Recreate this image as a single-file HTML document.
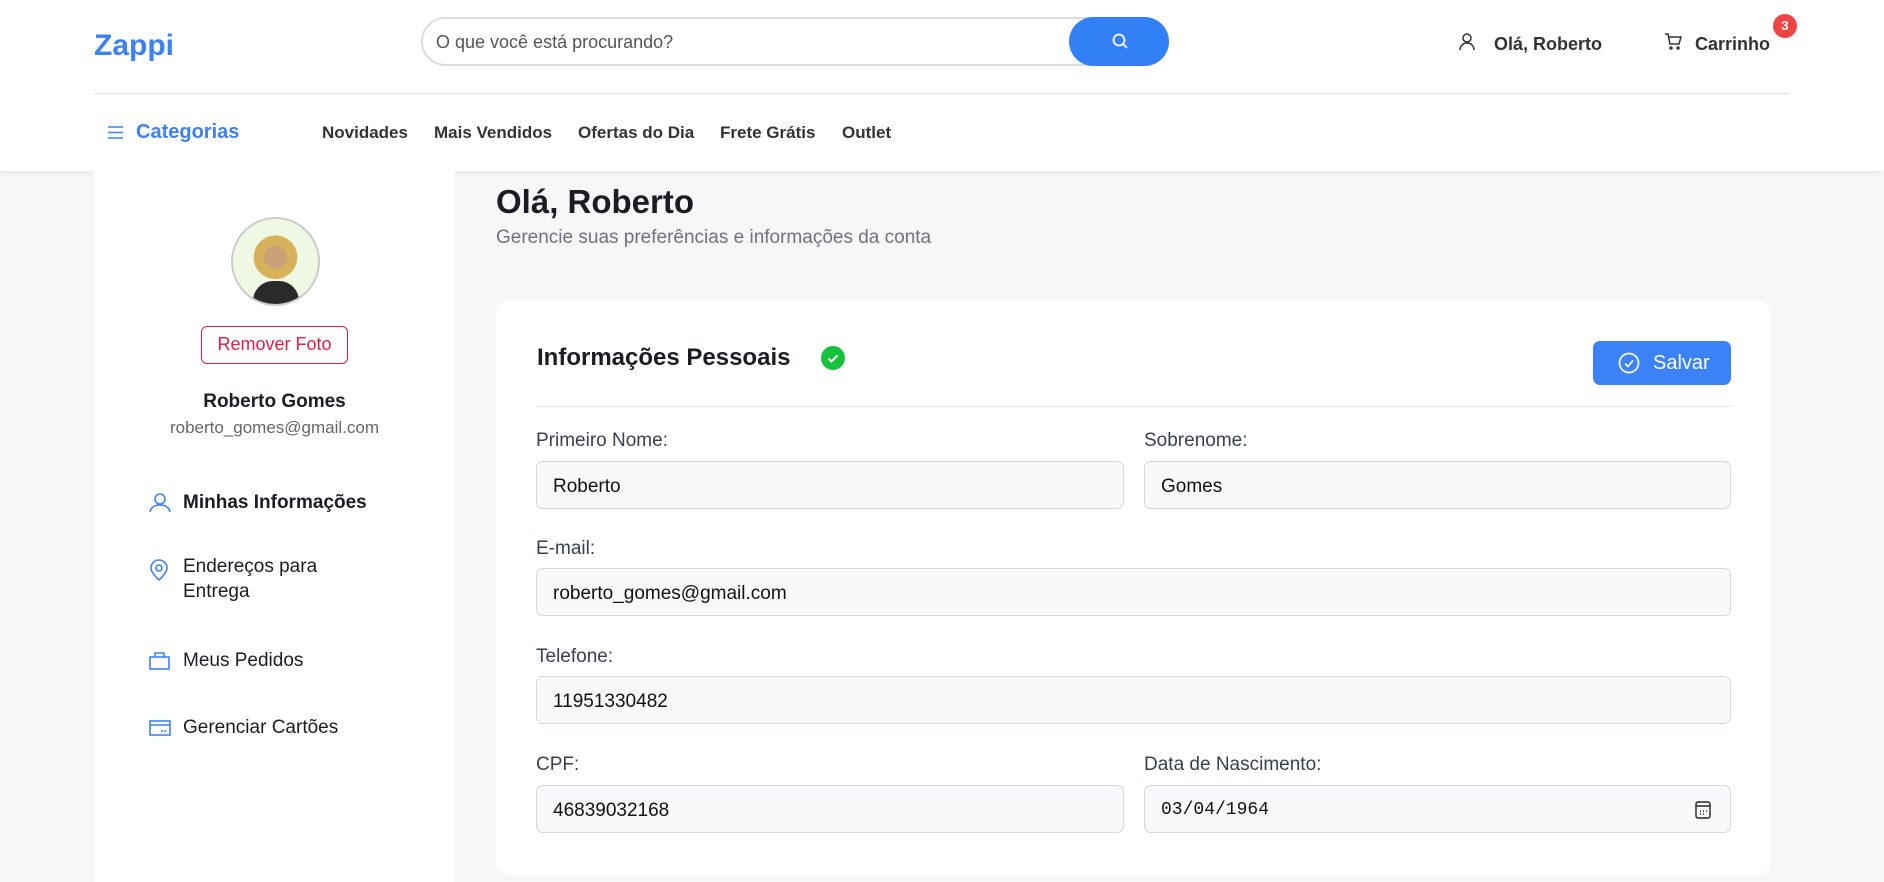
<!DOCTYPE html>
<html><head><meta charset="utf-8"><style>
*{box-sizing:border-box;margin:0;padding:0}
body{width:1884px;height:882px;overflow:hidden;background:#f7f7f8;font-family:"Liberation Sans",sans-serif;color:#1a1d26;position:relative}
.hdr{position:absolute;left:0;top:0;width:1884px;height:171px;background:#fff;box-shadow:0 2px 6px rgba(0,0,0,.06)}
.abs{position:absolute}
.logo{left:94px;top:29px;font-size:30px;font-weight:bold;color:#3b82f6}
.search{left:421px;top:17px;width:748px;height:49px;border:2px solid #ddd;border-radius:25px;background:#fff}
.search span{position:absolute;left:13px;top:13px;font-size:18px;color:#555}
.sbtn{left:1069px;top:17px;width:100px;height:49px;border-radius:25px;background:#3180f6}
.hl{left:94px;top:93px;width:1696px;height:1px;background:#e2e2e2}
.nav{top:123px;font-size:17px;font-weight:bold;color:#333}
.side{left:94px;top:171px;width:361px;height:711px;background:#fff}
.menu{font-size:19px;color:#1a1d26}
.card{left:496px;top:300px;width:1275px;height:575px;background:#fff;border-radius:14px}
.lbl{font-size:19px;color:#374151}
.inp{height:48px;border:1px solid #d4d7dd;border-radius:7px;background:#f8f9fb;font-size:19px;padding:14px 16px;color:#111}
</style></head><body>
<div class="hdr">
<div class="abs logo">Zappi</div>
<div class="abs search"><span>O que você está procurando?</span></div>
<div class="abs sbtn"><svg class="abs" style="left:42px;top:15px" width="18" height="18" viewBox="0 0 18 18" fill="none" stroke="#fff" stroke-width="1.8"><circle cx="8" cy="8" r="5.5"/><path d="M12 12l4 4"/></svg></div>
<svg class="abs" style="left:1459px;top:33px" width="16" height="18" viewBox="0 0 16 18" fill="none" stroke="#333" stroke-width="1.5"><circle cx="8" cy="5" r="4"/><path d="M1 17c0-4 3-7 7-7s7 3 7 7"/></svg>
<div class="abs" style="left:1494px;top:34px;font-size:18px;font-weight:bold;color:#333">Olá, Roberto</div>
<svg class="abs" style="left:1664px;top:33px" width="18" height="17" viewBox="0 0 18 17" fill="none" stroke="#333" stroke-width="1.5"><path d="M1 1h3l2 10h9l2-7H5"/><circle cx="7" cy="15" r="1"/><circle cx="14" cy="15" r="1"/></svg>
<div class="abs" style="left:1695px;top:34px;font-size:18px;font-weight:bold;color:#333">Carrinho</div>
<div class="abs" style="left:1773px;top:14px;width:24px;height:24px;border-radius:12px;background:#ef4444;color:#fff;font-size:13px;font-weight:bold;text-align:center;line-height:24px">3</div>
<div class="abs hl"></div>
<svg class="abs" style="left:108px;top:126px" width="15" height="13" viewBox="0 0 15 13" stroke="#3b82f6" stroke-width="1.6"><path d="M0 1h15M0 6.5h15M0 12h15"/></svg>
<div class="abs" style="left:136px;top:121px;font-size:20px;font-weight:bold;color:#3b82f6">Categorias</div>
<div class="abs nav" style="left:322px">Novidades</div>
<div class="abs nav" style="left:434px">Mais Vendidos</div>
<div class="abs nav" style="left:578px">Ofertas do Dia</div>
<div class="abs nav" style="left:720px">Frete Grátis</div>
<div class="abs nav" style="left:842px">Outlet</div>
</div>
<div class="abs side">
<div class="abs" style="left:137px;top:46px;width:89px;height:89px;border-radius:50%;border:2px solid #ccc;background:radial-gradient(circle at 50% 45%,#c9a277 0 18%,#d8b25a 19% 34%,#eef8e2 35%);overflow:hidden"><div style="position:absolute;left:20px;top:62px;width:46px;height:30px;background:#2a2a2a;border-radius:20px 20px 0 0"></div></div>
<div class="abs" style="left:107px;top:155px;width:147px;height:38px;border:1.5px solid #e11d48;border-radius:6px;color:#e11d48;font-size:18px;text-align:center;line-height:35px">Remover Foto</div>
<div class="abs" style="left:0;width:361px;top:220px;text-align:center;font-size:19px;font-weight:bold">Roberto Gomes</div>
<div class="abs" style="left:0;width:361px;top:247px;text-align:center;font-size:17px;color:#666">roberto_gomes@gmail.com</div>
<svg class="abs" style="left:55px;top:322px" width="22" height="20" viewBox="0 0 22 20" fill="none" stroke="#3b82f6" stroke-width="1.6"><circle cx="11" cy="6" r="5"/><path d="M1 19c1-5 5-7 10-7s9 2 10 7"/></svg>
<div class="abs menu" style="left:89px;top:321px;font-weight:bold">Minhas Informações</div>
<svg class="abs" style="left:56px;top:388px" width="18" height="22" viewBox="0 0 18 22" fill="none" stroke="#3b82f6" stroke-width="1.6"><path d="M9 21s8-7 8-12A8 8 0 0 0 1 9c0 5 8 12 8 12z"/><circle cx="9" cy="9" r="3"/></svg>
<div class="abs menu" style="left:89px;top:383px;line-height:25px">Endereços para<br>Entrega</div>
<svg class="abs" style="left:55px;top:481px" width="21" height="18" viewBox="0 0 21 18" fill="none" stroke="#3b82f6" stroke-width="1.6"><rect x="1" y="5" width="19" height="12"/><path d="M6 5V1h9v4"/></svg>
<div class="abs menu" style="left:89px;top:479px">Meus Pedidos</div>
<svg class="abs" style="left:55px;top:549px" width="22" height="16" viewBox="0 0 22 16" fill="none" stroke="#3b82f6" stroke-width="1.6"><rect x="1" y="1" width="20" height="14"/><path d="M1 5h20M12 11h2M15 11h2"/></svg>
<div class="abs menu" style="left:89px;top:546px">Gerenciar Cartões</div>
</div>
<div class="abs" style="left:496px;top:183px;font-size:33px;font-weight:bold">Olá, Roberto</div>
<div class="abs" style="left:496px;top:227px;font-size:19px;color:#6b7280">Gerencie suas preferências e informações da conta</div>
<div class="abs card">
<div class="abs" style="left:41px;top:44px;font-size:24px;font-weight:bold">Informações Pessoais</div>
<svg class="abs" style="left:325px;top:46px" width="24" height="24" viewBox="0 0 24 24"><circle cx="12" cy="12" r="12" fill="#16c23b"/><path d="M7.5 12.5l3 3 6-6" stroke="#fff" stroke-width="2" fill="none"/></svg>
<div class="abs" style="left:1097px;top:41px;width:138px;height:44px;border-radius:7px;background:#3b82f6;color:#fff;font-size:20px;line-height:44px;padding-left:60px">Salvar</div>
<svg class="abs" style="left:1122px;top:52px" width="22" height="22" viewBox="0 0 22 22" fill="none" stroke="#fff" stroke-width="1.7"><circle cx="11" cy="11" r="9.5"/><path d="M7 11.5l3 3 5-6"/></svg>
<div class="abs" style="left:41px;top:106px;width:1194px;height:1px;background:#e5e7eb"></div>
<div class="abs lbl" style="left:40px;top:130px">Primeiro Nome:</div>
<div class="abs lbl" style="left:648px;top:130px">Sobrenome:</div>
<div class="abs inp" style="left:40px;top:161px;width:588px">Roberto</div>
<div class="abs inp" style="left:648px;top:161px;width:587px">Gomes</div>
<div class="abs lbl" style="left:40px;top:238px">E-mail:</div>
<div class="abs inp" style="left:40px;top:268px;width:1195px">roberto_gomes@gmail.com</div>
<div class="abs lbl" style="left:40px;top:346px">Telefone:</div>
<div class="abs inp" style="left:40px;top:376px;width:1195px">11951330482</div>
<div class="abs lbl" style="left:40px;top:454px">CPF:</div>
<div class="abs lbl" style="left:648px;top:454px">Data de Nascimento:</div>
<div class="abs inp" style="left:40px;top:485px;width:588px">46839032168</div>
<div class="abs inp" style="left:648px;top:485px;width:587px;font-family:'Liberation Mono','DejaVu Sans Mono',monospace;font-size:18px">03/04/1964</div>
<svg class="abs" style="left:1199px;top:501px" width="16" height="18" viewBox="0 0 16 18" fill="none" stroke="#222" stroke-width="1.4"><rect x="1" y="1" width="14" height="16" rx="2"/><path d="M1 5h14M5 10h1M8 10h1M11 10h1M5 13h1M8 13h1"/></svg>
</div>
</body></html>
